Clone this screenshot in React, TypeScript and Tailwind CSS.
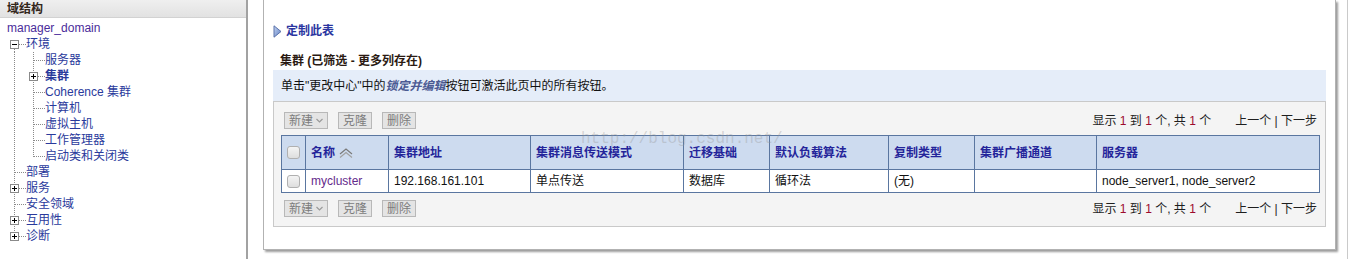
import React from 'react'

type Vert = 'full' | 'last' | 'below' | 'none'
type Box = 'plus' | 'minus' | null

interface Cell {
  v: Vert
  b: boolean
  box?: Box
}

interface TreeRow {
  cells: Cell[]
  label: string
  bold?: boolean
}

const LINE = '#8a8a8a'

function Connector({ v, b, box }: Cell) {
  return (
    <svg width="19" height="16" viewBox="0 0 19 16" className="shrink-0">
      {v === 'full' && <line x1="7.5" y1="0" x2="7.5" y2="16" stroke={LINE} strokeDasharray="1 1" />}
      {v === 'last' && <line x1="7.5" y1="0" x2="7.5" y2="9" stroke={LINE} strokeDasharray="1 1" />}
      {v === 'below' && <line x1="7.5" y1="13" x2="7.5" y2="16" stroke={LINE} strokeDasharray="1 1" />}
      {b && <line x1="8" y1="8.5" x2="19" y2="8.5" stroke={LINE} strokeDasharray="1 1" />}
      {box && (
        <g>
          <rect x="3.5" y="4.5" width="8" height="8" fill="#fff" stroke="#8a8a8a" />
          <line x1="5" y1="8.5" x2="10" y2="8.5" stroke="#000" />
          {box === 'plus' && <line x1="7.5" y1="6" x2="7.5" y2="11" stroke="#000" />}
        </g>
      )}
    </svg>
  )
}

const F: Cell = { v: 'full', b: false }
const FB: Cell = { v: 'full', b: true }

const TREE: TreeRow[] = [
  { cells: [{ v: 'below', b: true, box: 'minus' }], label: '环境' },
  { cells: [F, FB], label: '服务器' },
  { cells: [F, { v: 'full', b: true, box: 'plus' }], label: '集群', bold: true },
  { cells: [F, FB], label: 'Coherence 集群' },
  { cells: [F, FB], label: '计算机' },
  { cells: [F, FB], label: '虚拟主机' },
  { cells: [F, FB], label: '工作管理器' },
  { cells: [F, { v: 'last', b: true }], label: '启动类和关闭类' },
  { cells: [FB], label: '部署' },
  { cells: [{ v: 'full', b: true, box: 'plus' }], label: '服务' },
  { cells: [FB], label: '安全领域' },
  { cells: [{ v: 'full', b: true, box: 'plus' }], label: '互用性' },
  { cells: [{ v: 'last', b: true, box: 'plus' }], label: '诊断' },
]

const COLUMNS = [
  { title: '名称', w: 83, sort: true },
  { title: '集群地址', w: 142 },
  { title: '集群消息传送模式', w: 153 },
  { title: '迁移基础', w: 86 },
  { title: '默认负载算法', w: 119 },
  { title: '复制类型', w: 86 },
  { title: '集群广播通道', w: 122 },
  { title: '服务器', w: 223 },
]

const ROW = ['192.168.161.101', '单点传送', '数据库', '循环法', '(无)', '', 'node_server1, node_server2']

function Check() {
  return <span className="block h-[13px] w-[13px] rounded-[3px] border border-[#b0b0b0] bg-gradient-to-b from-[#f4f4f4] to-[#dedede]" />
}

function Btn({ label, menu }: { label: string; menu?: boolean }) {
  return (
    <span className="flex h-[17px] items-center gap-[3px] border border-[#b8b8b8] bg-[#e4e4e4] px-[4px] text-[#7c7c7c]">
      {label}
      {menu && (
        <svg width="7" height="5" viewBox="0 0 7 5">
          <path d="M0.5 1 L3.5 4 L6.5 1" fill="none" stroke="#9a9a9a" strokeWidth="1.2" />
        </svg>
      )}
    </span>
  )
}

function Pager() {
  const n = <span className="text-[#9c0a2c]">1</span>
  return (
    <div className="flex items-center text-[#1e1e1e]">
      <span>
        显示 {n} 到 {n} 个, 共 {n} 个
      </span>
      <span className="ml-[24px]">上一个 | 下一步</span>
    </div>
  )
}

function Toolbar() {
  return (
    <div className="flex h-[17px] items-center justify-between pl-[3px] pr-[3px]">
      <div className="flex gap-[10px]">
        <Btn label="新建" menu />
        <Btn label="克隆" />
        <Btn label="删除" />
      </div>
      <Pager />
    </div>
  )
}

export default function App() {
  return (
    <div className="flex h-[259px] w-[1350px] overflow-hidden bg-white font-['Liberation_Sans','Noto_Sans_CJK_SC',sans-serif] text-[12px] leading-4">
      {/* domain tree */}
      <div className="w-[248px] shrink-0 border-r-2 border-[#a2a2a2]">
        <div className="flex h-[18px] items-center border-b border-[#d2d2d2] bg-gradient-to-b from-[#efefef] to-[#e2e2e2] pl-[7px] font-bold text-[#33261a]">
          域结构
        </div>
        <div className="pl-[7px] pt-[2px]">
          <div className="flex h-4 items-center text-[#4a2c9a]">manager_domain</div>
          {TREE.map(row => (
            <div key={row.label} className="flex h-4 items-center">
              {row.cells.map((c, i) => (
                <Connector key={i} {...c} />
              ))}
              <span className={row.bold ? 'font-bold text-[#2a3a9c]' : 'text-[#2a3a9c]'}>{row.label}</span>
            </div>
          ))}
        </div>
      </div>

      {/* main */}
      <div className="flex-1 pr-[2px]">
        <div className="h-full border-r border-[#cacaca] pl-[15px]">
          <div className="relative h-[250px] w-[1073px] border-x border-b border-[#b2b2b2] bg-white px-[9px] pt-[23px] shadow-[2px_2px_2px_#9c9c9c]">
            <div className="flex h-4 items-center gap-[4px]">
              <svg width="9" height="13" viewBox="0 0 9 13">
                <defs>
                  <linearGradient id="tri" x1="0" y1="0" x2="1" y2="1">
                    <stop offset="0" stopColor="#c4d4f2" />
                    <stop offset="1" stopColor="#5f7fc2" />
                  </linearGradient>
                </defs>
                <path d="M1 0.8 L8 6.5 L1 12.2 Z" fill="url(#tri)" stroke="#5a72aa" strokeWidth="1" />
              </svg>
              <span className="font-bold text-[#2a35a0]">定制此表</span>
            </div>

            <div className="mt-[14px] flex h-4 items-center pl-[7px] font-bold text-[#2b1a12]">
              集群 (已筛选 - 更多列存在)
            </div>

            <div className="mt-[1px] flex h-[31px] items-center bg-[#e5edf9] pl-[8px] text-[#111]">
              单击"更改中心"中的
              <span className="font-semibold italic text-[#4b5a93]">锁定并编辑</span>
              按钮可激活此页中的所有按钮。
            </div>

            <div className="border border-[#c9c9c9] bg-[#f4f4f4] pb-[9px] pl-[7px] pr-[5px] pt-[10px]">
              <Toolbar />
              <table className="mt-[6px] w-full table-fixed border-collapse border border-[#5a76a0]">
                <colgroup>
                  <col className="w-[24px]" />
                  {COLUMNS.map(c => (
                    <col key={c.title} style={{ width: c.w }} />
                  ))}
                </colgroup>
                <thead>
                  <tr className="h-[34px] bg-[#cddbef]">
                    <th className="border border-[#5a76a0] p-0">
                      <div className="flex justify-center">
                        <Check />
                      </div>
                    </th>
                    {COLUMNS.map(c => (
                      <th key={c.title} className="border border-[#5a76a0] px-[5px] text-left font-bold text-[#24249a]">
                        <span className="flex items-center gap-[4px]">
                          {c.title}
                          {c.sort && (
                            <svg width="14" height="10" viewBox="0 0 14 10">
                              <path d="M1 6 L7 1 L13 6" fill="none" stroke="#7a7a7a" strokeWidth="1.2" />
                              <path d="M1 9.5 L7 4.5 L13 9.5" fill="none" stroke="#a0a0a0" strokeWidth="1.2" />
                            </svg>
                          )}
                        </span>
                      </th>
                    ))}
                  </tr>
                </thead>
                <tbody>
                  <tr className="h-[23px] bg-white">
                    <td className="border border-[#5a76a0] p-0">
                      <div className="flex justify-center">
                        <Check />
                      </div>
                    </td>
                    <td className="border border-[#5a76a0] px-[5px] text-[#642a8c]">mycluster</td>
                    {ROW.map((v, i) => (
                      <td key={i} className="border border-[#5a76a0] px-[5px] text-[#111]">
                        {v}
                      </td>
                    ))}
                  </tr>
                </tbody>
              </table>
              <div className="mt-[7px]">
                <Toolbar />
              </div>
            </div>

            <span className="pointer-events-none absolute left-[317px] top-[131px] font-['Liberation_Mono',monospace] text-[16px] leading-4 text-[rgba(150,150,150,0.35)]">
              http://blog.csdn.net/
            </span>
          </div>
        </div>
      </div>
    </div>
  )
}
